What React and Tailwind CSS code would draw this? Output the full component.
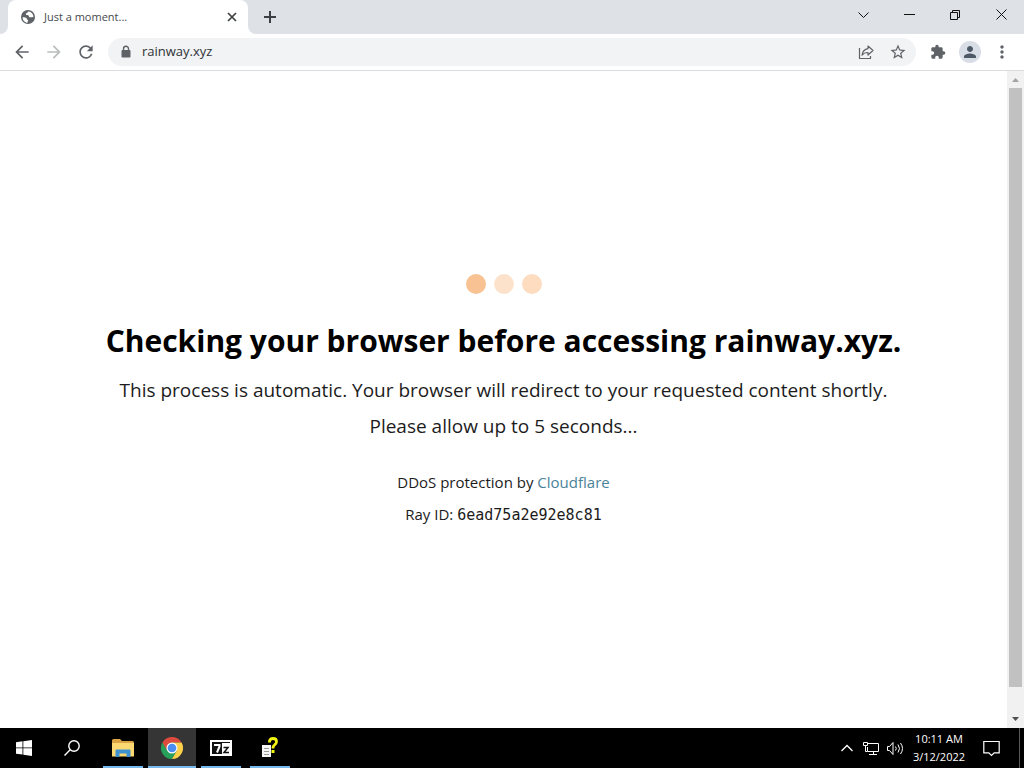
import {
  MdArrowBack,
  MdArrowForward,
  MdRefresh,
  MdStarBorder,
  MdExtension,
  MdPerson,
  MdMoreVert,
} from "react-icons/md";

const WINDOW_BUTTONS = [
  { label: "Search tabs", d: "M3.5 6.5l5 5 5-5" },
  { label: "Minimize", d: "M3 8.5h11" },
  { label: "Restore", d: "M3.5 6.5h7v7h-7zM5.5 6.5v-2h7v7h-2" },
  { label: "Close", d: "M3.5 3.5l10 10M13.5 3.5l-10 10" },
];

function GlobeIcon() {
  return (
    <svg viewBox="0 0 16 16" className="h-4 w-4 shrink-0">
      <circle cx="8" cy="8" r="7" fill="#5f6368" />
      <path
        d="M2.6 8.2c1.6-.2 3 .1 3.9.9.5.5 0 1.2.6 1.5.8.3 1.2.5.9 1.4-.2.6-.7 1.1-.4 1.7-2.6 0-4.9-2.3-5-5.5z"
        fill="#fff"
      />
      <path
        d="M8.6 2.4c-1.5.3-.5 1.4-1.7 1.7-1 .3-1.4.9-.8 1.6.6.6 1.7.1 2.5.7.6.5.2 1.5 1.1 1.8 1.1.3 2.2-.2 3.7-.2.1-2.9-2-5.3-4.8-5.6z"
        fill="#fff"
      />
    </svg>
  );
}

function TabStrip() {
  return (
    <div className="flex h-[34px] shrink-0 bg-[#dee1e6] pl-2">
      <div className="relative flex w-60 items-center rounded-t-lg bg-white pr-2 pl-3">
        <svg viewBox="0 0 8 8" className="absolute bottom-0 -left-2 h-2 w-2">
          <path d="M8 0v8H0a8 8 0 0 0 8-8z" fill="#fff" />
        </svg>
        <svg viewBox="0 0 8 8" className="absolute -right-2 bottom-0 h-2 w-2">
          <path d="M0 0v8h8a8 8 0 0 1-8-8z" fill="#fff" />
        </svg>
        <GlobeIcon />
        <span className="ml-2 flex-1 text-[11px] text-[#45494d]">Just a moment...</span>
        <button aria-label="Close tab" className="flex h-4 w-4 items-center justify-center">
          <svg viewBox="0 0 10 10" className="h-2.5 w-2.5">
            <path d="M1 1l8 8M9 1l-8 8" stroke="#3c4043" strokeWidth="1.7" />
          </svg>
        </button>
      </div>
      <button aria-label="New tab" className="ml-2 flex w-7 items-center justify-center">
        <svg viewBox="0 0 12 12" className="h-3 w-3">
          <path d="M6 0v12M0 6h12" stroke="#3c4043" strokeWidth="2" />
        </svg>
      </button>
      <div className="ml-auto flex h-7">
        {WINDOW_BUTTONS.map(({ label, d }) => (
          <button
            key={label}
            aria-label={label}
            className="flex w-[46px] items-center justify-center"
          >
            <svg viewBox="0 0 17 17" className="h-[17px] w-[17px]" fill="none" stroke="#111">
              <path d={d} />
            </svg>
          </button>
        ))}
      </div>
    </div>
  );
}

function Toolbar() {
  const iconButton = "flex h-7 w-8 items-center justify-center";

  return (
    <div className="flex h-[37px] shrink-0 items-center border-b border-[#dadce0] bg-white pl-1.5 text-[#5f6368]">
      <button aria-label="Back" className={iconButton}>
        <MdArrowBack className="h-5 w-5" />
      </button>
      <button aria-label="Forward" className={iconButton}>
        <MdArrowForward className="h-5 w-5 text-[#babcbe]" />
      </button>
      <button aria-label="Reload" className={iconButton}>
        <MdRefresh className="h-5 w-5" />
      </button>
      <div className="ml-1.5 flex h-7 flex-1 items-center rounded-full bg-[#f1f3f4] pr-0.5 pl-2.5">
        <svg viewBox="0 0 16 16" className="h-4 w-4 shrink-0">
          <path d="M5.5 7V4.8a2.5 2.5 0 0 1 5 0V7" fill="none" stroke="#5f6368" strokeWidth="1.4" />
          <rect x="3.5" y="6" width="9" height="7.5" rx="1" fill="#5f6368" />
        </svg>
        <input
          aria-label="Address"
          defaultValue="rainway.xyz"
          className="ml-2 min-w-0 flex-1 bg-transparent text-[13px] text-[#303236] outline-none"
        />
        <button aria-label="Share" className={iconButton}>
          <svg
            viewBox="0 0 18 18"
            className="h-[18px] w-[18px]"
            fill="none"
            stroke="currentColor"
            strokeWidth="1.2"
            strokeLinejoin="round"
          >
            <path d="M2.5 5v10.5h11V13" />
            <path d="M11 3l5 4.5-5 4.5V9.5c-2.8 0-4.6.8-6 2.7.4-3.4 2.3-6 6-6.6z" />
          </svg>
        </button>
        <button aria-label="Bookmark" className={iconButton}>
          <MdStarBorder className="h-[18px] w-[18px]" />
        </button>
      </div>
      <div className="flex px-1.5">
        <button aria-label="Extensions" className={iconButton}>
          <MdExtension className="h-4 w-4" />
        </button>
        <button aria-label="Profile" className={iconButton}>
          <span className="flex h-[22px] w-[22px] items-center justify-center rounded-full bg-[#d9dee6]">
            <MdPerson className="h-[18px] w-[18px] text-[#4d5966]" />
          </span>
        </button>
        <button aria-label="Menu" className={iconButton}>
          <MdMoreVert className="h-5 w-5" />
        </button>
      </div>
    </div>
  );
}

function Scrollbar() {
  return (
    <div className="flex w-[17px] shrink-0 flex-col items-center bg-[#f1f1f1]">
      <svg viewBox="0 0 17 17" className="h-[17px] w-[17px]">
        <path d="M5 11l3.5-4 3.5 4z" fill="#a3a3a3" />
      </svg>
      <div className="mb-6 w-[13px] flex-1 bg-[#c1c1c1]" />
      <svg viewBox="0 0 17 17" className="h-[17px] w-[17px]">
        <path d="M5 6l3.5 4L12 6z" fill="#505050" />
      </svg>
    </div>
  );
}

function Challenge() {
  return (
    <main className="flex flex-1 flex-col items-center justify-center pt-1.5 text-center text-[#1c1c1c]">
      <div className="flex gap-2">
        <span className="h-5 w-5 rounded-full bg-[#f8c293]" />
        <span className="h-5 w-5 rounded-full bg-[#fde2cb]" />
        <span className="h-5 w-5 rounded-full bg-[#fddcc0]" />
      </div>
      <h1 className="mt-6 text-[30px] leading-[46px] font-bold text-black">
        Checking your browser before accessing rainway.xyz.
      </h1>
      <p className="mt-2 text-[19px] leading-9">
        This process is automatic. Your browser will redirect to your requested content shortly.
      </p>
      <p className="text-[19px] leading-9">Please allow up to 5 seconds...</p>
      <p className="mt-[22px] text-[15px] leading-8">
        DDoS protection by{" "}
        <a href="#" className="text-[#4a8399]">
          Cloudflare
        </a>
      </p>
      <p className="text-[15px] leading-8">
        Ray ID:{" "}
        <code className="font-['DejaVu_Sans_Mono',monospace] text-[15px]">6ead75a2e92e8c81</code>
      </p>
    </main>
  );
}

function ExplorerIcon() {
  return (
    <svg viewBox="0 0 22 18" className="h-[18px] w-[22px]">
      <path d="M0 1.5Q0 0 1.5 0H8l2 2h10.5Q22 2 22 3.5V17H0z" fill="#d9a441" />
      <path d="M0 4h22v13.5H0z" fill="#fbd871" />
      <path d="M3.5 18v-6.5q0-1 1-1h13q1 0 1 1V18H14.5v-3.5h-7V18z" fill="#3f92cf" />
    </svg>
  );
}

function ChromeIcon() {
  return (
    <svg viewBox="0 0 48 48" className="h-[22px] w-[22px]">
      <path d="M24 24V48A24 24 0 0 1 3.2 12z" fill="#27a05a" />
      <path d="M34.4 30L24 48 13.6 30z" fill="#27a05a" />
      <path d="M3.2 12L13.6 30 24 12h20.8A24 24 0 0 0 3.2 12z" fill="#dd4b3e" />
      <path d="M34.4 30L24 48A24 24 0 0 0 44.8 12H24z" fill="#fdd04a" />
      <circle cx="24" cy="24" r="12" fill="#fff" />
      <circle cx="24" cy="24" r="9.5" fill="#4b8df0" />
    </svg>
  );
}

function SevenZipIcon() {
  return (
    <svg viewBox="0 0 22 16" className="h-4 w-[22px]">
      <path d="M0 0h22v16H0z" fill="#fff" />
      <path d="M2 2h10v12H2z" fill="#111" />
      <path d="M4 5h5.5v1.5L7 12.5" fill="none" stroke="#fff" strokeWidth="2" />
      <path d="M13.5 7.5h4.5l-4 5h5" fill="none" stroke="#111" strokeWidth="1.5" />
      <path d="M12 2.5h8" stroke="#111" />
    </svg>
  );
}

function HelpFileIcon() {
  return (
    <svg viewBox="0 0 18 22" className="h-[22px] w-[18px]">
      <path d="M1 8h9v12H1z" fill="#f5f5f5" />
      <path d="M3 11.5h5M3 14.5h5M3 17.5h5" stroke="#999" />
      <path
        d="M8.5 5.5V4.5q0-3 3.5-3t3.5 3q0 2-1.7 3.2Q12 9 12 11.5"
        fill="none"
        stroke="#f3f312"
        strokeWidth="2.8"
      />
      <path d="M10.5 13h3v3h-3z" fill="#f3f312" />
    </svg>
  );
}

const TASKS = [
  { label: "File Explorer", Icon: ExplorerIcon },
  { label: "Google Chrome", Icon: ChromeIcon, active: true },
  { label: "7-Zip", Icon: SevenZipIcon },
  { label: "Help", Icon: HelpFileIcon },
];

function Taskbar() {
  const trayButton = "flex w-6 items-center justify-center";

  return (
    <footer className="flex h-10 shrink-0 bg-black text-white">
      <button aria-label="Start" className="flex w-12 items-center justify-center">
        <svg viewBox="0 0 16 16" className="h-4 w-4" fill="#fff">
          <path d="M0 2.2l6.5-.9v6.2H0zM7.3 1.2L16 0v7.5H7.3zM0 8.3h6.5v6.3L0 13.7zM7.3 8.3H16V16l-8.7-1.2z" />
        </svg>
      </button>
      <button aria-label="Search" className="flex w-12 items-center justify-center">
        <svg viewBox="0 0 16 16" className="h-4 w-4" fill="none" stroke="#fff" strokeWidth="1.4">
          <circle cx="10" cy="6" r="5.2" />
          <path d="M6.2 9.8L.5 15.5" />
        </svg>
      </button>
      <div className="ml-[3px] flex gap-px">
        {TASKS.map(({ label, Icon, active }) => (
          <button
            key={label}
            aria-label={label}
            className={`relative flex w-12 items-center justify-center ${active ? "bg-[#353535]" : ""}`}
          >
            <Icon />
            <span
              className={`absolute bottom-0 h-0.5 bg-[#76b9ed] ${active ? "inset-x-0" : "inset-x-1"}`}
            />
          </button>
        ))}
      </div>
      <div className="ml-auto flex">
        <button aria-label="Show hidden icons" className={trayButton}>
          <svg viewBox="0 0 12 8" className="h-2 w-3" fill="none" stroke="#fff" strokeWidth="1.3">
            <path d="M.5 7L6 1.5 11.5 7" />
          </svg>
        </button>
        <button aria-label="Network" className={trayButton}>
          <svg viewBox="0 0 16 15" className="h-[15px] w-4" fill="none" stroke="#fff">
            <path d="M5 2.5h10.5v8h-11V6M10.5 10.5v3M6 13.5h8M.5 1.5h4v3h-4zM2.5 4.5v6h2" />
          </svg>
        </button>
        <button aria-label="Volume" className={trayButton}>
          <svg viewBox="0 0 17 15" className="h-[15px] w-[17px]" fill="none" stroke="#fff">
            <path d="M.5 5.5h2l3.5-4v12l-3.5-4h-2z" />
            <path d="M8.5 5.5q1.5 2 0 4M11 3.5q3 4 0 8M13.5 2q4 5.5 0 11" />
          </svg>
        </button>
        <button className="w-16 text-center text-[11px] leading-[18px]">
          10:11 AM
          <br />
          3/12/2022
        </button>
        <button aria-label="Notifications" className="flex w-10 items-center justify-center">
          <svg viewBox="0 0 17 17" className="h-[17px] w-[17px]" fill="none" stroke="#fff" strokeWidth="1.2">
            <path d="M.8 1.5h15.4v11.3h-5L8.5 15.5l-2.7-2.7h-5z" />
          </svg>
        </button>
        <div className="ml-2 w-[5px] border-l border-[#5a5a5a]" />
      </div>
    </footer>
  );
}

export default function App() {
  return (
    <div className="flex h-screen flex-col bg-white font-['Open_Sans','Noto_Sans',sans-serif]">
      <TabStrip />
      <Toolbar />
      <div className="flex min-h-0 flex-1">
        <Challenge />
        <Scrollbar />
      </div>
      <Taskbar />
    </div>
  );
}
